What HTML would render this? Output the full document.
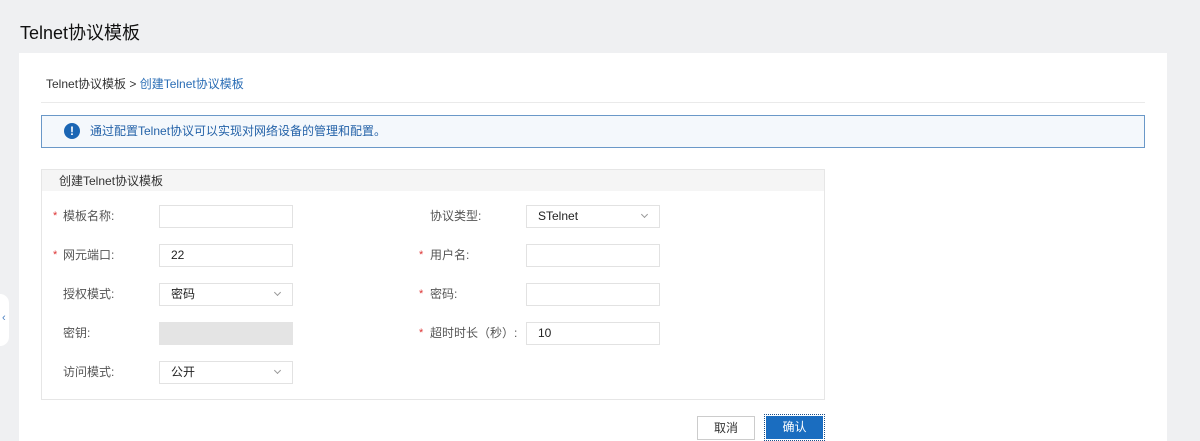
<!DOCTYPE html><html><head><meta charset="utf-8"><style>
html,body{margin:0;width:1200px;height:441px;overflow:hidden}
body{background:#eff0f2;font-family:"Liberation Sans","Noto Sans CJK SC",sans-serif;position:relative;color:#333}
.a{position:absolute}
.t{font-size:12px;line-height:14px;white-space:nowrap}
.in{position:absolute;height:21px;border:1px solid #e2e2e2;background:#fff;font-size:12px;line-height:21px;box-sizing:content-box;padding:0 0 0 11px;width:121px;color:#222}
.dd:after{content:"";position:absolute;right:12px;top:6px;width:4px;height:4px;border-right:1px solid #999;border-bottom:1px solid #999;transform:rotate(45deg)}
.lb{position:absolute;font-size:12px;color:#555;line-height:14px;white-space:nowrap}
.st{position:absolute;color:#d33;font-size:11px;line-height:14px}
</style></head><body>
<div class="a" style="left:20px;top:21px;font-size:18px;color:#111;line-height:24px">Telnet协议模板</div>
<div class="a" style="left:19px;top:53px;width:1148px;height:388px;background:#fff"></div>
<div class="a" style="left:0;top:294px;width:9px;height:52px;background:#fff;border-radius:0 26px 26px 0"></div>
<div class="a" style="left:2px;top:312px;font-size:11px;color:#4a7fc0">‹</div>
<div class="a t" style="left:46px;top:77px;color:#333">Telnet协议模板 &gt; <span style="color:#2a6db5">创建Telnet协议模板</span></div>
<div class="a" style="left:41px;top:102px;width:1104px;height:1px;background:#eaeaea"></div>
<div class="a" style="left:41px;top:115px;width:1102px;height:31px;border:1px solid #6a98c8;background:#f4f8fc"></div>
<div class="a" style="left:64px;top:123px;width:16px;height:16px;border-radius:50%;background:#1b66b4;color:#fff;font-size:12px;font-weight:bold;text-align:center;line-height:16px">!</div>
<div class="a t" style="left:90px;top:124px;color:#2462a8">通过配置Telnet协议可以实现对网络设备的管理和配置。</div>
<div class="a" style="left:41px;top:169px;width:782px;height:229px;border:1px solid #e6e6e6"></div>
<div class="a" style="left:42px;top:170px;width:782px;height:21px;background:#f5f5f5"></div>
<div class="a t" style="left:59px;top:174px;color:#333">创建Telnet协议模板</div>

<span class="st" style="left:53px;top:209px">*</span><span class="lb" style="left:63px;top:209px">模板名称:</span>
<div class="in" style="left:159px;top:205px"></div>
<span class="st" style="left:53px;top:248px">*</span><span class="lb" style="left:63px;top:248px">网元端口:</span>
<div class="in" style="left:159px;top:244px">22</div>
<span class="lb" style="left:63px;top:287px">授权模式:</span>
<div class="in dd" style="left:159px;top:283px">密码</div>
<span class="lb" style="left:63px;top:326px">密钥:</span>
<div class="in" style="left:159px;top:322px;background:#e4e4e4;border-color:#e4e4e4"></div>
<span class="lb" style="left:63px;top:365px">访问模式:</span>
<div class="in dd" style="left:159px;top:361px">公开</div>

<span class="lb" style="left:430px;top:209px">协议类型:</span>
<div class="in dd" style="left:526px;top:205px">STelnet</div>
<span class="st" style="left:419px;top:248px">*</span><span class="lb" style="left:430px;top:248px">用户名:</span>
<div class="in" style="left:526px;top:244px"></div>
<span class="st" style="left:419px;top:287px">*</span><span class="lb" style="left:430px;top:287px">密码:</span>
<div class="in" style="left:526px;top:283px"></div>
<span class="st" style="left:419px;top:326px">*</span><span class="lb" style="left:430px;top:326px">超时时长（秒）:</span>
<div class="in" style="left:526px;top:322px">10</div>

<div class="a" style="left:697px;top:416px;width:56px;height:22px;border:1px solid #ccc;background:#fff;font-size:12px;text-align:center;line-height:22px">取消</div>
<div class="a" style="left:764px;top:414px;width:61px;height:27px;border:1px dotted #1a4f8a;box-sizing:border-box;padding:1px"><div style="background:#1a6dc0;color:#fff;height:23px;font-size:12px;text-align:center;line-height:23px">确认</div></div>
</body></html>
